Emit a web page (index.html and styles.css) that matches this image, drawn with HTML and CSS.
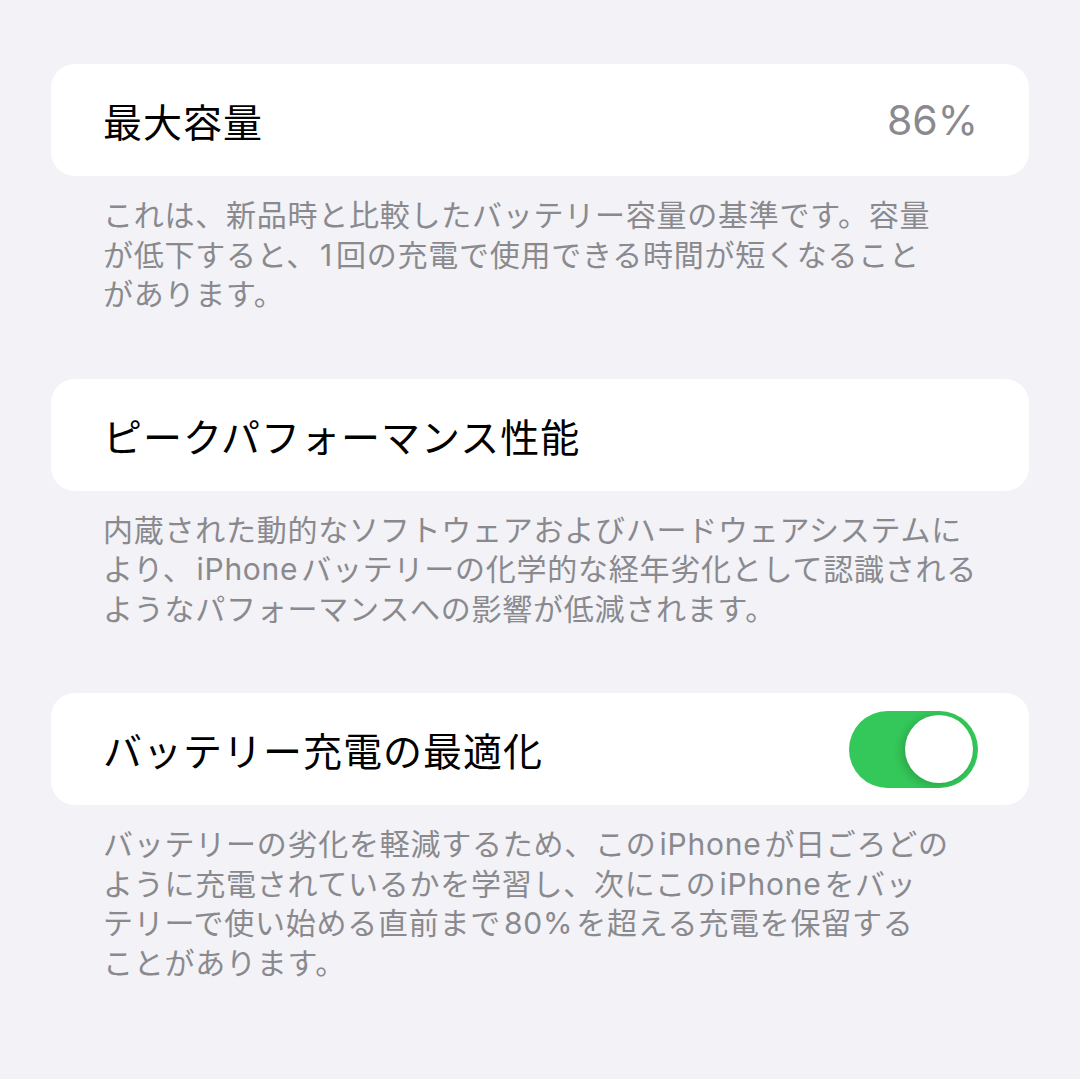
FILE: index.html
```html
<!DOCTYPE html>
<html lang="ja">
<head>
    <meta charset="UTF-8">
    <meta name="viewport" content="width=device-width, initial-scale=1.0">
    <title>バッテリーの状態</title>
    <link rel="stylesheet" href="styles.css">
</head>
<body>
    <div class="page">
        <div class="card">
            <span class="card-title">最大容量</span>
            <span class="card-value">86%</span>
        </div>
        <p class="note">これは、新品時と比較したバッテリー容量の基準です。容量<br>が低下すると、<span class="latin">1</span>回の充電で使用できる時間が短くなること<br>があります。</p>

        <div class="card">
            <span class="card-title">ピークパフォーマンス性能</span>
        </div>
        <p class="note">内蔵された動的なソフトウェアおよびハードウェアシステムに<br>より、<span class="latin">iPhone</span>バッテリーの化学的な経年劣化として認識される<br>ようなパフォーマンスへの影響が低減されます。</p>

        <div class="card">
            <span class="card-title">バッテリー充電の最適化</span>
            <label class="switch">
                <input type="checkbox" checked>
                <span class="knob"></span>
            </label>
        </div>
        <p class="note">バッテリーの劣化を軽減するため、この<span class="latin">iPhone</span>が日ごろどの<br>ように充電されているかを学習し、次にこの<span class="latin">iPhone</span>をバッ<br>テリーで使い始める直前まで<span class="latin">80%</span>を超える充電を保留する<br>ことがあります。</p>
    </div>
</body>
</html>
```

FILE: styles.css
```css
body {
    margin: 0;
    padding: 0;
    background-color: #f2f2f7;
    font-family: Inter, "Noto Sans CJK JP", sans-serif;
}
.page {
    padding: 64px 51px 40px;
}
.card {
    display: flex;
    align-items: center;
    justify-content: space-between;
    height: 112px;
    padding: 0 51px 0 52px;
    border-radius: 24px;
    background-color: #fff;
    box-sizing: border-box;
}
.card-title {
    font-size: 39px;
    letter-spacing: 1px;
    color: #000;
}
.card-value {
    font-size: 41px;
    color: #8a8a8e;
}
.note {
    margin: 20px 0 64px;
    padding-left: 52px;
    font-size: 30px;
    line-height: 39.5px;
    letter-spacing: 0.75px;
    color: #8a8a8e;
    white-space: nowrap;
}
.latin {
    margin: 0 3px;
}
.switch {
    position: relative;
    display: block;
    width: 129px;
    height: 77px;
}
.switch input {
    display: none;
}
.knob {
    position: absolute;
    inset: 0;
    border-radius: 40px;
    background-color: #34c759;
}
.knob::after {
    content: "";
    position: absolute;
    top: 4.5px;
    right: 5px;
    width: 68px;
    height: 68px;
    border-radius: 50%;
    background-color: #fff;
    box-shadow: -3px 2px 8px rgba(0, 0, 0, 0.18);
}
```
